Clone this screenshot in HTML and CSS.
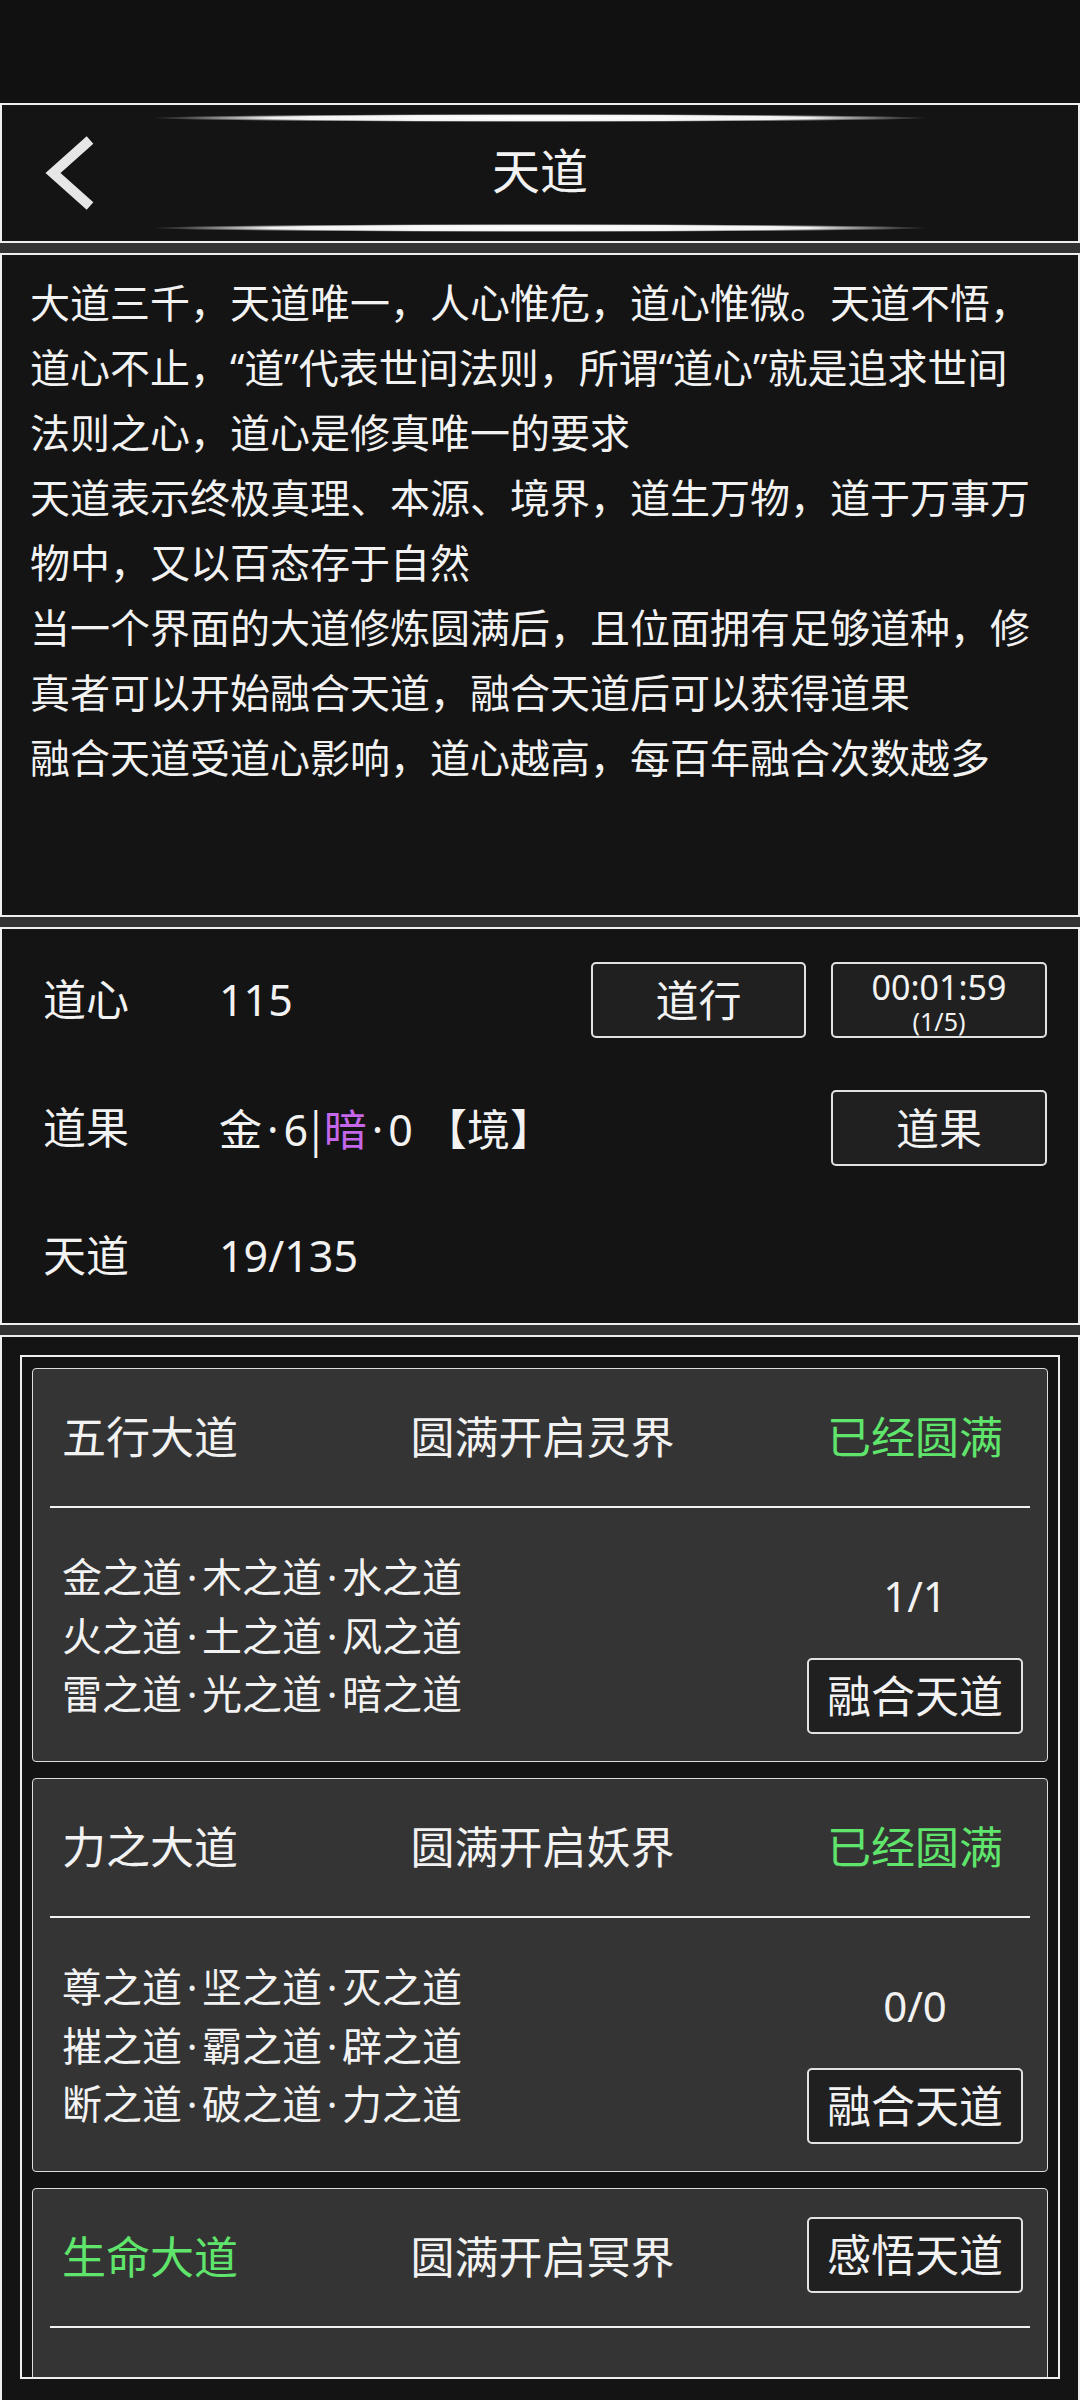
FILE: index.html
```html
<!DOCTYPE html>
<html lang="zh-CN">
<head>
    <meta charset="UTF-8">
    <meta name="viewport" content="width=device-width, initial-scale=1.0">
    <title>天道</title>
    <link rel="stylesheet" href="styles.css">
</head>
<body>
    <div class="status-bar"></div>

    <header class="panel title-panel">
        <button class="back-btn" aria-label="返回">
            <svg width="60" height="90" viewBox="0 0 60 90">
                <polyline points="50,12 13,45 50,78" fill="none" stroke="#e6e6e6" stroke-width="10" stroke-linejoin="miter" stroke-linecap="butt"/>
            </svg>
        </button>
        <div class="glow"></div>
        <h1>天道</h1>
        <div class="glow"></div>
    </header>

    <section class="panel intro">
        <p>大道三千，天道唯一，人心惟危，道心惟微。天道不悟，<br>道心不止，“道”代表世间法则，所谓“道心”就是追求世间<br>法则之心，道心是修真唯一的要求</p>
        <p>天道表示终极真理、本源、境界，道生万物，道于万事万<br>物中，又以百态存于自然</p>
        <p>当一个界面的大道修炼圆满后，且位面拥有足够道种，修<br>真者可以开始融合天道，融合天道后可以获得道果</p>
        <p>融合天道受道心影响，道心越高，每百年融合次数越多</p>
    </section>

    <section class="panel stats">
        <div class="stat-label">道心</div>
        <div class="stat-value">115</div>
        <button class="btn">道行</button>
        <button class="btn timer">
            <span class="timer-time">00:01:59</span>
            <span class="timer-count">(1/5)</span>
        </button>

        <div class="stat-label">道果</div>
        <div class="stat-value">金<span class="dot">·</span>6<span class="caret">|</span><span class="dark-dao">暗</span><span class="dot">·</span>0 【境】</div>
        <button class="btn col-last">道果</button>

        <div class="stat-label">天道</div>
        <div class="stat-value">19/135</div>
    </section>

    <section class="panel dao-list">
        <div class="frame">
            <div class="card">
                <div class="card-head">
                    <span class="dao-name">五行大道</span>
                    <span class="dao-realm">圆满开启灵界</span>
                    <span class="dao-state done">已经圆满</span>
                </div>
                <div class="card-rule"></div>
                <div class="card-body">
                    <div class="dao-seeds">
                        <div>金之道<span class="dot">·</span>木之道<span class="dot">·</span>水之道</div>
                        <div>火之道<span class="dot">·</span>土之道<span class="dot">·</span>风之道</div>
                        <div>雷之道<span class="dot">·</span>光之道<span class="dot">·</span>暗之道</div>
                    </div>
                    <div class="card-side">
                        <div class="fuse-count">1/1</div>
                        <button class="btn">融合天道</button>
                    </div>
                </div>
            </div>

            <div class="card">
                <div class="card-head">
                    <span class="dao-name">力之大道</span>
                    <span class="dao-realm">圆满开启妖界</span>
                    <span class="dao-state done">已经圆满</span>
                </div>
                <div class="card-rule"></div>
                <div class="card-body">
                    <div class="dao-seeds">
                        <div>尊之道<span class="dot">·</span>坚之道<span class="dot">·</span>灭之道</div>
                        <div>摧之道<span class="dot">·</span>霸之道<span class="dot">·</span>辟之道</div>
                        <div>断之道<span class="dot">·</span>破之道<span class="dot">·</span>力之道</div>
                    </div>
                    <div class="card-side">
                        <div class="fuse-count">0/0</div>
                        <button class="btn">融合天道</button>
                    </div>
                </div>
            </div>

            <div class="card">
                <div class="card-head">
                    <span class="dao-name done">生命大道</span>
                    <span class="dao-realm">圆满开启冥界</span>
                    <span class="dao-state"><button class="btn">感悟天道</button></span>
                </div>
                <div class="card-rule"></div>
                <div class="card-body"></div>
            </div>
        </div>
    </section>
</body>
</html>
```

FILE: styles.css
```css
* {
    box-sizing: border-box;
}
html, body {
    margin: 0;
    height: 2400px;
    overflow: hidden;
}
body {
    background-color: #333;
    color: #f2f2f2;
    font-family: "Noto Sans", "Noto Sans CJK SC", sans-serif;
}
.status-bar {
    height: 103px;
    background-color: #111;
}
.panel {
    background-color: #141414;
    border: 2px solid #efefef;
    margin-bottom: 10px;
}

/* title */
.title-panel {
    height: 140px;
    display: grid;
    grid-template-columns: 150px 1fr 150px;
    grid-template-rows: 8px 1fr 8px;
    padding: 9px 0;
}
.back-btn {
    grid-column: 1;
    grid-row: 1 / 4;
    align-self: center;
    justify-self: start;
    margin-left: 38px;
    padding: 0;
    border: 0;
    background: none;
    line-height: 0;
}
.glow {
    grid-column: 2;
    background: radial-gradient(closest-side, #ffffff 0%, #f2f2f2 70%, rgba(170, 170, 170, 0.45) 90%, rgba(0, 0, 0, 0) 100%);
}
.title-panel h1 {
    grid-column: 2;
    margin: -4px 0 0;
    align-self: center;
    text-align: center;
    font-size: 48px;
    font-weight: 400;
    line-height: 60px;
}

/* intro text */
.intro {
    height: 664px;
    padding: 15px 20px 0 28px;
    font-size: 40px;
    line-height: 65px;
    white-space: nowrap;
}
.intro p {
    margin: 0;
}

/* stats */
.stats {
    height: 398px;
    display: grid;
    grid-template-columns: 151px 1fr 215px 216px;
    grid-template-rows: repeat(3, 128px);
    column-gap: 25px;
    align-items: center;
    padding: 7px 31px 0 41px;
    font-size: 43px;
}
.stat-label, .stat-value {
    line-height: 60px;
    white-space: nowrap;
}
.dark-dao {
    color: #c467ea;
}
.dot {
    display: inline-block;
    width: 0.5em;
    text-align: center;
}
.caret {
    font-family: "Noto Sans CJK SC", sans-serif;
    margin: 0 2px;
}
.btn {
    height: 76px;
    padding: 0;
    border: 2px solid #e2e2e2;
    border-radius: 5px;
    background-color: #202020;
    color: #f2f2f2;
    font-family: inherit;
    font-size: 43px;
    line-height: 1;
    display: flex;
    align-items: center;
    justify-content: center;
}
.col-last {
    grid-column: 4;
}
.timer {
    flex-direction: column;
    padding-top: 4px;
}
.timer-time {
    font-size: 34px;
    line-height: 38px;
}
.timer-count {
    font-size: 25px;
    line-height: 30px;
}

/* dao list */
.dao-list {
    border-bottom: 0;
    padding: 18px 18px 40px;
}
.frame {
    height: 1024px;
    border: 2px solid #efefef;
    padding: 11px 10px 0;
    overflow: hidden;
    display: flex;
    flex-direction: column;
    gap: 16px;
}
.card {
    flex-shrink: 0;
    border: 1px solid #dcdcdc;
    border-radius: 4px;
    background-color: #343434;
}
.card-head {
    height: 137px;
    display: grid;
    grid-template-columns: 1fr auto 1fr;
    align-items: center;
    padding: 0 24px 5px 29px;
    font-size: 44px;
}
.dao-realm {
    text-align: center;
}
.dao-state {
    justify-self: end;
    width: 216px;
    text-align: center;
}
.done {
    color: #5fe56b;
}
.card-rule {
    height: 2px;
    margin: 0 17px;
    background-color: #f2f2f2;
}
.card-body {
    height: 253px;
    display: flex;
    justify-content: space-between;
    align-items: flex-start;
    padding: 40px 24px 0 29px;
}
.dao-seeds {
    font-size: 40px;
    line-height: 58.5px;
}
.card-side {
    width: 216px;
    margin-top: 18px;
    display: flex;
    flex-direction: column;
    align-items: center;
    gap: 32px;
}
.fuse-count {
    font-size: 42px;
    line-height: 60px;
}
.card-side .btn, .dao-state .btn {
    width: 216px;
    font-size: 44px;
}
```
